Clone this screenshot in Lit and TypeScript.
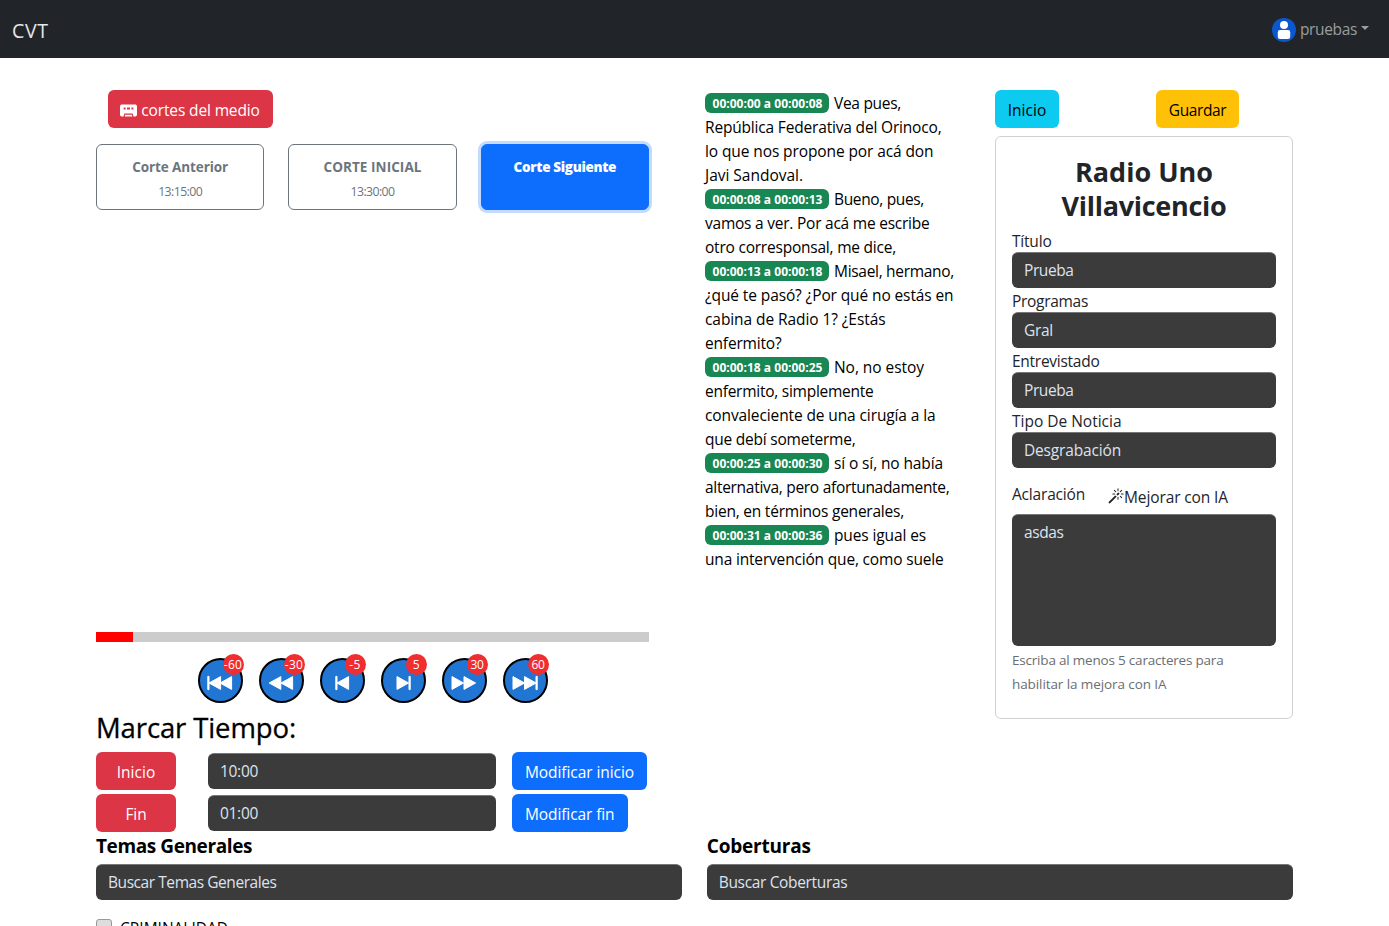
import { LitElement, html, css, svg } from "lit";
import { customElement, property } from "lit/decorators.js";

/** A run of text whose tracking is adjusted so that it takes the given width. */
@customElement("text-run")
class TextRun extends LitElement {
  @property({ type: Number }) w = 0;
  static styles = css`
    :host { display: inline-block; white-space: nowrap; }
  `;
  async firstUpdated() {
    this.fit();
    await document.fonts.ready;
    this.fit();
  }
  fit() {
    this.style.letterSpacing = "0px";
    const natural = this.getBoundingClientRect().width;
    const count = (this.textContent || "").trim().length;
    if (count && this.w) this.style.letterSpacing = ((this.w - natural) / count).toFixed(3) + "px";
  }
  render() {
    return html`<slot></slot>`;
  }
}

const t = (text: string, w: number) => html`<text-run .w=${w}>${text}</text-run>`;

type Segment = { time: string; lines: [string, number][] };

const segments: Segment[] = [
  { time: "00:00:00 a 00:00:08", lines: [["Vea pues,", 67], ["República Federativa del Orinoco,", 236.5], ["lo que nos propone por acá don", 228.5], ["Javi Sandoval.", 98]] },
  { time: "00:00:08 a 00:00:13", lines: [["Bueno, pues,", 90], ["vamos a ver. Por acá me escribe", 224.5], ["otro corresponsal, me dice,", 191]] },
  { time: "00:00:13 a 00:00:18", lines: [["Misael, hermano,", 120], ["¿qué te pasó? ¿Por qué no estás en", 248.5], ["cabina de Radio 1? ¿Estás", 180.5], ["enfermito?", 76.5]] },
  { time: "00:00:18 a 00:00:25", lines: [["No, no estoy", 90], ["enfermito, simplemente", 168.5], ["convaleciente de una cirugía a la", 230.5], ["que debí someterme,", 150.5]] },
  { time: "00:00:25 a 00:00:30", lines: [["sí o sí, no había", 109], ["alternativa, pero afortunadamente,", 244.5], ["bien, en términos generales,", 199]] },
  { time: "00:00:31 a 00:00:36", lines: [["pues igual es", 92], ["una intervención que, como suele", 238.5]] },
];

const bar = (x: number) => svg`<rect x=${x} y="5.4" width="1.2" height="13.2" />`;
const left = (x: number) => svg`<path d="M${x} 12 L${x + 11.6} 5.6 V18.4 Z" />`;
const right = (x: number) => svg`<path d="M${x} 5.6 L${x + 11.6} 12 L${x} 18.4 Z" />`;

const skips = [
  { label: "-60", w: 18.5, icon: svg`${bar(0.8)}${left(2)}${left(13)}` },
  { label: "-30", w: 18.5, icon: svg`${left(1.2)}${left(13)}` },
  { label: "-5", w: 11.5, icon: svg`${bar(6.8)}${left(8)}` },
  { label: "5", w: 6.5, icon: svg`${right(7)}${bar(19)}` },
  { label: "30", w: 13, icon: svg`${right(1)}${right(13)}` },
  { label: "60", w: 13, icon: svg`${right(1)}${right(12.5)}${bar(24)}` },
];

const fields: [string, number, string, number][] = [
  ["Título", 39.5, "Prueba", 49.5],
  ["Programas", 76, "Gral", 29],
  ["Entrevistado", 87.5, "Prueba", 49.5],
  ["Tipo De Noticia", 109.5, "Desgrabación", 97],
];

@customElement("app-root")
class AppRoot extends LitElement {
  static styles = css`
    * { box-sizing: border-box; }
    :host {
      display: block;
      height: 926px;
      overflow: hidden;
      background: #fff;
      color: #000;
      font: 15.5px/24px "Open Sans", "Noto Sans", sans-serif;
    }
    svg { display: block; flex: none; }
    .nav {
      height: 58px;
      padding: 0 20px 0 12px;
      background: #212529;
      display: flex;
      align-items: center;
      justify-content: space-between;
    }
    .brand { font-size: 19.5px; color: #e6e7e8; padding-top: 3px; }
    .user { display: flex; align-items: center; color: #9b9d9f; padding-top: 2px; }
    .user text-run { margin: -2px 0 0 4px; }
    .caret {
      margin: 0 0 4px 4px;
      border: 4.3px solid transparent;
      border-top-color: currentColor;
      border-bottom: 0;
    }
    .top {
      height: 777px;
      padding: 32px 96px 0;
      display: grid;
      grid-template-columns: 609px 290px 298px;
    }
    .player { width: 553px; }
    .btn {
      display: inline-flex;
      align-items: center;
      justify-content: center;
      height: 38px;
      border-radius: 6px;
      padding: 2px 13px 0;
      color: #fff;
      white-space: nowrap;
    }
    .red { background: #dc3545; }
    .blue { background: #0d6efd; }
    .cyan { background: #0dcaf0; color: #000; }
    .yellow { background: #ffc107; color: #000; }
    .medio { margin-left: 12px; width: 165px; }
    .medio svg { margin: 0 4px 0 -1px; }
    .cuts { display: grid; grid-template-columns: repeat(3, 1fr); gap: 24px; margin-top: 16px; }
    .cut {
      height: 66px;
      border: 1px solid #6c757d;
      border-radius: 6px;
      color: #6c757d;
      display: flex;
      flex-direction: column;
      align-items: center;
      padding-top: 10px;
      font-size: 13.5px;
      font-weight: 700;
    }
    .cut .hour { font-size: 12.3px; font-weight: 400; margin-top: 1px; }
    .cut.next {
      background: #0d6efd;
      border-color: #0d6efd;
      color: #fff;
      font-weight: 800;
      box-shadow: 0 0 0 3px #c2dbfe;
    }
    .progress { margin-top: 422px; height: 10px; background: #ccc; }
    .done { height: 100%; background: red; }
    .skips { display: flex; gap: 16px; margin: 16px 0 0 101.5px; }
    .skip {
      position: relative;
      width: 45px;
      height: 45px;
      border-radius: 50%;
      border: 2px solid #000;
      background: #2176d4;
      display: flex;
      justify-content: center;
      padding-top: 11px;
    }
    .skip svg { fill: #fff; stroke: #fff; stroke-width: 1; stroke-linejoin: round; }
    .count {
      position: absolute;
      right: -3px;
      top: -6px;
      width: 21px;
      height: 21px;
      border-radius: 50%;
      background: #f02d2f;
      color: #fff;
      font-size: 12px;
      line-height: 22px;
      display: flex;
      justify-content: center;
    }
    h2 {
      margin: 8px 0 6.5px;
      font-size: 27.5px;
      line-height: 34px;
      font-weight: 500;
      -webkit-text-stroke: 0.3px #000;
    }
    .mark {
      display: grid;
      grid-template-columns: 96px 288px auto;
      column-gap: 16px;
      height: 42px;
      align-items: start;
      justify-items: start;
    }
    .mark .red { width: 80px; }
    .input {
      height: 36px;
      width: 100%;
      border-radius: 6px;
      background: #3b3b3b;
      color: #dee2ee;
      border-top: 1px solid #777;
      padding: 5px 12px;
    }
    .mark .input { margin-top: 1.5px; }
    .transcript { padding-top: 1px; }
    .line { height: 24px; display: flex; align-items: center; white-space: nowrap; }
    .stamp {
      width: 124px;
      height: 20px;
      margin-right: 5px;
      border-radius: 6px;
      background: #198754;
      color: #fff;
      font-size: 12px;
      font-weight: 700;
      line-height: 22px;
      padding-left: 7.5px;
    }
    .actions { display: flex; }
    .actions .cyan { width: 64px; }
    .actions .yellow { width: 83px; margin-left: 97px; }
    .card {
      margin-top: 8px;
      height: 583px;
      border: 1px solid #d0d1d2;
      border-radius: 6px;
      padding: 18px 16px 0;
      color: #212529;
    }
    h1 { margin: 0 0 5px; font-size: 27px; line-height: 34px; font-weight: 700; text-align: center; }
    .label { height: 24px; padding-top: 1px; }
    .note { display: flex; align-items: center; height: 26px; margin-top: 14px; }
    .note text-run { margin-top: -2px; }
    .note svg { margin: 1px 0 0 23px; }
    .note .ai { padding-top: 4px; }
    .area { height: 132px; margin-top: 6px; }
    .help { font-size: 13.5px; color: #6a6e72; padding-top: 2px; }
    .filters { padding: 0 96px; display: grid; grid-template-columns: 1fr 1fr; gap: 24.5px; }
    h3 { margin: 0 0 7px; font-size: 19px; line-height: 22px; font-weight: 700; }
    .check { display: flex; align-items: flex-start; gap: 8px; margin-top: 19px; line-height: 19px; }
    .box { width: 16px; height: 16px; border: 1px solid #999; border-radius: 3px; background: #ddd; }
  `;

  render() {
    return html`
      <nav class="nav">
        <span class="brand">${t("CVT", 36.5)}</span>
        <div class="user">
          <svg width="24" height="24" viewBox="0 0 24 24">
            <circle cx="12" cy="12" r="12" fill="#0b57d0" />
            <circle cx="12" cy="7" r="4" fill="#fff" />
            <rect x="5.8" y="12" width="12.4" height="9" rx="2.2" fill="#fff" />
          </svg>
          ${t("pruebas", 57)}<i class="caret"></i>
        </div>
      </nav>
      <main class="top">
        <section class="player">
          <span class="btn red medio">
            <svg width="17" height="17" viewBox="0 0 17 17" fill="#fff">
              <path fill-rule="evenodd" d="M1.2 2.5H15.8L17 3.7V13.3L15.8 14.5H13.6L12.6 11.5H4.4L3.4 14.5H1.2L0 13.3V3.7ZM3.6 5.4V7.4H5.6V5.4ZM7 5.4V7.4H10V5.4ZM11.4 5.4V7.4H13.4V5.4Z" />
              <path d="M4.6 14.5 5.2 12.7H11.8L12.4 14.5Z" />
            </svg>
            ${t("cortes del medio", 118.5)}
          </span>
          <div class="cuts">
            <div class="cut">${t("Corte Anterior", 96)}<span class="hour">${t("13:15:00", 44)}</span></div>
            <div class="cut">${t("CORTE INICIAL", 98)}<span class="hour">${t("13:30:00", 44)}</span></div>
            <div class="cut next">${t("Corte Siguiente", 102.5)}</div>
          </div>
          <div class="progress"><div class="done" style="width:6.7%"></div></div>
          <div class="skips">
            ${skips.map((s) => html`<div class="skip">
              <svg width="27" height="23" viewBox="0 0 27 23">${s.icon}</svg>
              <span class="count">${t(s.label, s.w)}</span>
            </div>`)}
          </div>
          <h2>${t("Marcar Tiempo:", 200)}</h2>
          <div class="mark">
            <span class="btn red">${t("Inicio", 38.5)}</span>
            <div class="input">${t("10:00", 38)}</div>
            <span class="btn blue">${t("Modificar inicio", 109)}</span>
          </div>
          <div class="mark">
            <span class="btn red">${t("Fin", 21)}</span>
            <div class="input">${t("01:00", 38)}</div>
            <span class="btn blue">${t("Modificar fin", 89.5)}</span>
          </div>
        </section>
        <section class="transcript">
          ${segments.map((s) => s.lines.map(([text, w], i) => html`<div class="line">
            ${i === 0 ? html`<span class="stamp">${t(s.time, 110)}</span>` : ""}${t(text, w)}
          </div>`))}
        </section>
        <section>
          <div class="actions">
            <span class="btn cyan">${t("Inicio", 38.5)}</span>
            <span class="btn yellow">${t("Guardar", 57.5)}</span>
          </div>
          <div class="card">
            <h1>${t("Radio Uno", 138)}<br />${t("Villavicencio", 165)}</h1>
            ${fields.map(([label, lw, value, vw]) => html`
              <div class="label">${t(label, lw)}</div>
              <div class="input">${t(value, vw)}</div>
            `)}
            <div class="note">
              ${t("Aclaración", 73)}
              <svg width="16" height="16" viewBox="0 0 16 16" fill="#212529">
                <path d="M9.5 2.672a.5.5 0 1 0 1 0V.843a.5.5 0 0 0-1 0v1.829Zm4.5.035A.5.5 0 0 0 13.293 2L12 3.293a.5.5 0 1 0 .707.707L14 2.707ZM7.293 4A.5.5 0 1 0 8 3.293L6.707 2A.5.5 0 0 0 6 2.707L7.293 4Zm-.621 2.5a.5.5 0 1 0 0-1H4.843a.5.5 0 1 0 0 1h1.829Zm8.485 0a.5.5 0 1 0 0-1h-1.829a.5.5 0 0 0 0 1h1.829ZM13.293 10A.5.5 0 1 0 14 9.293L12.707 8a.5.5 0 1 0-.707.707L13.293 10ZM9.5 11.157a.5.5 0 0 0 1 0V9.328a.5.5 0 0 0-1 0v1.829Zm1.854-5.097a.5.5 0 0 0 0-.706l-.708-.708a.5.5 0 0 0-.707 0L8.646 5.94a.5.5 0 0 0 0 .707l.708.708a.5.5 0 0 0 .707 0l1.293-1.293Zm-3 3a.5.5 0 0 0 0-.706l-.708-.708a.5.5 0 0 0-.707 0L.646 13.94a.5.5 0 0 0 0 .707l.707.707a.5.5 0 0 0 .707 0L8.354 9.06Z" />
              </svg>
              <span class="ai">${t("Mejorar con IA", 104)}</span>
            </div>
            <div class="input area">${t("asdas", 39.5)}</div>
            <div class="help">${t("Escriba al menos 5 caracteres para", 211.5)}<br />${t("habilitar la mejora con IA", 154.5)}</div>
          </div>
        </section>
      </main>
      <section class="filters">
        <div>
          <h3>${t("Temas Generales", 156)}</h3>
          <div class="input">${t("Buscar Temas Generales", 168.5)}</div>
          <div class="check"><i class="box"></i>${t("CRIMINALIDAD", 108)}</div>
        </div>
        <div>
          <h3>${t("Coberturas", 104)}</h3>
          <div class="input">${t("Buscar Coberturas", 128.5)}</div>
        </div>
      </section>
    `;
  }
}
